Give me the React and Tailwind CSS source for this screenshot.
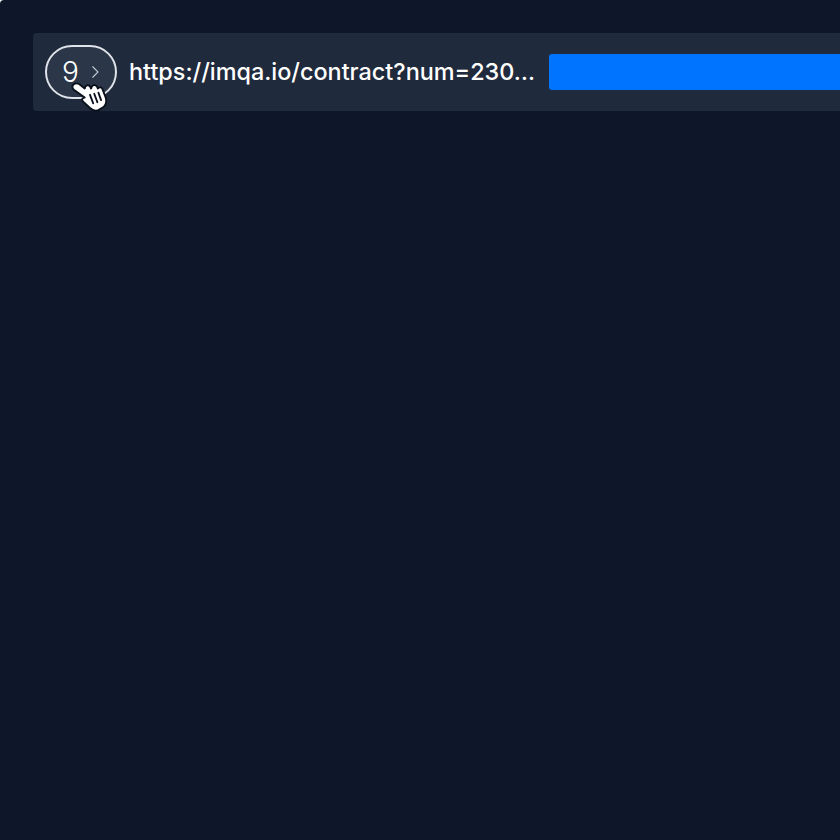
export default function App() {
  return (
    <div className="h-[840px] w-[840px] overflow-hidden rounded-tl-[4px] bg-[#0d1729] pl-[33px] pt-[33px] font-['Inter',sans-serif]">
      <div className="flex h-[78px] w-[840px] items-center rounded-[4px] bg-[#1f2a3c] pl-[12px]">
        <div className="relative flex h-[54px] w-[72px] shrink-0 items-center rounded-[27px] border-2 border-[#dfe2e8] bg-[#2b3648] pl-[15px]">
          <span className="text-[28px] font-light leading-none text-white">9</span>
          <svg className="ml-[12px]" width="9" height="14" viewBox="0 0 9 14" fill="none">
            <path d="M1.5 1.5 L7 7 L1.5 12.5" stroke="#c4c9d1" strokeWidth="1.1" />
          </svg>
          <svg className="absolute left-[24px] top-[35px]" width="38" height="32" viewBox="0 0 36 30">
            <path
              d="M1.5 3.5 C2.5 1 5.5 0.5 8 2 L13 6 C13.5 3 16.5 2 18 4 L19 6 C20 2 23 2 24.5 4 L25.5 6 C27 4 29.5 5 30 7 L33 15 C34 19 33 22 30 24 L26 26.5 C23 27.5 20 26.5 18 24.5 L11 18 C10 16 11 14.5 13 14.5 L3 7.5 C1.8 6.5 1 5 1.5 3.5 Z"
              fill="#fff"
              stroke="#0b111c"
              strokeWidth="1.8"
              strokeLinejoin="round"
            />
            <path d="M18 12 L21 20 M22 11 L25 19 M26 10 L28.5 17" stroke="#0b111c" strokeWidth="1.8" strokeLinecap="round" fill="none" />
          </svg>
        </div>
        <span className="ml-[12px] w-[406px] shrink-0 whitespace-nowrap text-[23.4px] font-[550] leading-none text-white">
          https://imqa.io/contract?num=230…
        </span>
        <div className="ml-[14px] h-[36px] flex-1 rounded-[3px] bg-[#0073ff]" />
      </div>
    </div>
  );
}
